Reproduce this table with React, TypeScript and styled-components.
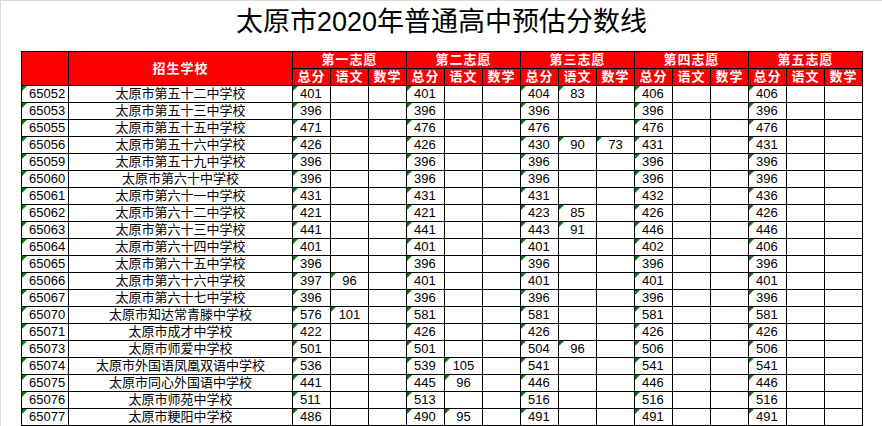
import React from "react";
import styled, { createGlobalStyle } from "styled-components";

const GlobalStyle = createGlobalStyle`
  html, body {
    margin: 0;
    padding: 0;
    background: #fff;
  }
`;

const Page = styled.div`
  width: 881px;
  height: 425px;
  border-top: 1px solid #d9d9d9;
  border-left: 1px solid #d9d9d9;
  overflow: hidden;
`;

const Title = styled.h1`
  margin: 0;
  height: 50px;
  line-height: 42px;
  text-align: center;
  font-family: "Liberation Sans", "Noto Sans CJK SC", sans-serif;
  font-size: 27px;
  font-weight: normal;
  color: #000;
`;

const Sheet = styled.div`
  display: grid;
  grid-template-columns: 46px 223px repeat(15, 37px);
  grid-auto-rows: 16px;
  gap: 1px;
  padding: 1px;
  margin-left: 20px;
  width: max-content;
  background: #000;
`;

const Head = styled.div<{ $rows?: number; $cols?: number }>`
  grid-row: span ${(p) => p.$rows || 1};
  grid-column: span ${(p) => p.$cols || 1};
  background: #ff0000;
  color: #fff;
  font-family: "Liberation Sans", "Noto Sans CJK SC", sans-serif;
  font-weight: bold;
  font-size: 13px;
  letter-spacing: 1px;
  display: flex;
  align-items: center;
  justify-content: center;
  line-height: 16px;
`;

const Cell = styled.div<{ $align?: "left" | "center"; $mark?: boolean }>`
  position: relative;
  background: #fff;
  color: #000;
  font-family: "Liberation Sans", "Noto Sans CJK SC", sans-serif;
  font-size: 13px;
  line-height: 16px;
  white-space: nowrap;
  text-align: ${(p) => p.$align || "center"};
  padding-left: ${(p) => (p.$align === "left" ? "7px" : "0")};

  &::before {
    content: "";
    display: ${(p) => (p.$mark ? "block" : "none")};
    position: absolute;
    left: 0;
    top: 0;
    border-top: 5px solid #008000;
    border-right: 5px solid transparent;
  }
`;

type Choice = [string, string?, string?];
type Row = { code: string; name: string; choices: Choice[] };

const rows: Row[] = [
  { code: "65052", name: "太原市第五十二中学校", choices: [["401"], ["401"], ["404", "83"], ["406"], ["406"]] },
  { code: "65053", name: "太原市第五十三中学校", choices: [["396"], ["396"], ["396"], ["396"], ["396"]] },
  { code: "65055", name: "太原市第五十五中学校", choices: [["471"], ["476"], ["476"], ["476"], ["476"]] },
  { code: "65056", name: "太原市第五十六中学校", choices: [["426"], ["426"], ["430", "90", "73"], ["431"], ["431"]] },
  { code: "65059", name: "太原市第五十九中学校", choices: [["396"], ["396"], ["396"], ["396"], ["396"]] },
  { code: "65060", name: "太原市第六十中学校", choices: [["396"], ["396"], ["396"], ["396"], ["396"]] },
  { code: "65061", name: "太原市第六十一中学校", choices: [["431"], ["431"], ["431"], ["432"], ["436"]] },
  { code: "65062", name: "太原市第六十二中学校", choices: [["421"], ["421"], ["423", "85"], ["426"], ["426"]] },
  { code: "65063", name: "太原市第六十三中学校", choices: [["441"], ["441"], ["443", "91"], ["446"], ["446"]] },
  { code: "65064", name: "太原市第六十四中学校", choices: [["401"], ["401"], ["401"], ["402"], ["406"]] },
  { code: "65065", name: "太原市第六十五中学校", choices: [["396"], ["396"], ["396"], ["396"], ["396"]] },
  { code: "65066", name: "太原市第六十六中学校", choices: [["397", "96"], ["401"], ["401"], ["401"], ["401"]] },
  { code: "65067", name: "太原市第六十七中学校", choices: [["396"], ["396"], ["396"], ["396"], ["396"]] },
  { code: "65070", name: "太原市知达常青滕中学校", choices: [["576", "101"], ["581"], ["581"], ["581"], ["581"]] },
  { code: "65071", name: "太原市成才中学校", choices: [["422"], ["426"], ["426"], ["426"], ["426"]] },
  { code: "65073", name: "太原市师爱中学校", choices: [["501"], ["501"], ["504", "96"], ["506"], ["506"]] },
  { code: "65074", name: "太原市外国语凤凰双语中学校", choices: [["536"], ["539", "105"], ["541"], ["541"], ["541"]] },
  { code: "65075", name: "太原市同心外国语中学校", choices: [["441"], ["445", "96"], ["446"], ["446"], ["446"]] },
  { code: "65076", name: "太原市师苑中学校", choices: [["511"], ["513"], ["516"], ["516"], ["516"]] },
  { code: "65077", name: "太原市粳阳中学校", choices: [["486"], ["490", "95"], ["491"], ["491"], ["491"]] },
];

const groups = ["第一志愿", "第二志愿", "第三志愿", "第四志愿", "第五志愿"];
const subjects = ["总分", "语文", "数学"];

const App = () => {
  return (
    <>
      <GlobalStyle />
      <Page>
        <Title>太原市2020年普通高中预估分数线</Title>
        <Sheet>
          <Head $rows={2} />
          <Head $rows={2}>招生学校</Head>
          {groups.map((g) => (
            <Head key={g} $cols={3}>{g}</Head>
          ))}
          {groups.map((g) =>
            subjects.map((s) => <Head key={g + s}>{s}</Head>)
          )}
          {rows.map((r) => (
            <React.Fragment key={r.code}>
              <Cell $align="left" $mark>{r.code}</Cell>
              <Cell>{r.name}</Cell>
              {r.choices.map((c, i) => (
                <React.Fragment key={i}>
                  <Cell $align="left" $mark>{c[0]}</Cell>
                  <Cell $mark={!!c[1]}>{c[1]}</Cell>
                  <Cell $mark={!!c[2]}>{c[2]}</Cell>
                </React.Fragment>
              ))}
            </React.Fragment>
          ))}
        </Sheet>
      </Page>
    </>
  );
};

export default App;
